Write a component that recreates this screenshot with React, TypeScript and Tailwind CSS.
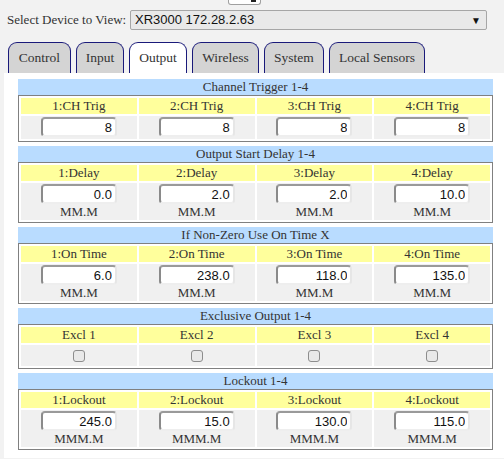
import React from "react";

const serif = "font-['Liberation_Serif','Times_New_Roman',serif]";
const sans = "font-['Liberation_Sans',Arial,sans-serif]";

type Sec = {
  title: string;
  labels: string[];
  values?: string[];
  unit?: string;
  checkbox?: boolean;
};

const sections: Sec[] = [
  { title: "Channel Trigger 1-4", labels: ["1:CH Trig", "2:CH Trig", "3:CH Trig", "4:CH Trig"], values: ["8", "8", "8", "8"] },
  { title: "Output Start Delay 1-4", labels: ["1:Delay", "2:Delay", "3:Delay", "4:Delay"], values: ["0.0", "2.0", "2.0", "10.0"], unit: "MM.M" },
  { title: "If Non-Zero Use On Time X", labels: ["1:On Time", "2:On Time", "3:On Time", "4:On Time"], values: ["6.0", "238.0", "118.0", "135.0"], unit: "MM.M" },
  { title: "Exclusive Output 1-4", labels: ["Excl 1", "Excl 2", "Excl 3", "Excl 4"], checkbox: true },
  { title: "Lockout 1-4", labels: ["1:Lockout", "2:Lockout", "3:Lockout", "4:Lockout"], values: ["245.0", "15.0", "130.0", "115.0"], unit: "MMM.M" },
];

const tabs = [
  { name: "Control", w: "w-[63px]" },
  { name: "Input", w: "w-[48px]" },
  { name: "Output", w: "w-[58px]", active: true },
  { name: "Wireless", w: "w-[67px]" },
  { name: "System", w: "w-[60px]" },
  { name: "Local Sensors", w: "w-[96px]" },
];

function Section({ s }: { s: Sec }) {
  return (
    <div>
      <div className="h-[16px] bg-[#b9dcff] text-center text-[13px] leading-[16px] text-[#333]">{s.title}</div>
      <div className="grid grid-cols-4 gap-[2px] border border-[#808080] bg-white p-[2px]">
        {s.labels.map((l) => (
          <div key={l} className="h-[16px] bg-[#ffff9c] text-center text-[13px] leading-[16px] text-[#333]">
            {l}
          </div>
        ))}
        {s.checkbox
          ? s.labels.map((l) => (
              <div key={l + "c"} className="flex h-[21px] items-center justify-center bg-[#f0f0f0]">
                <div className="h-[12px] w-[12px] rounded-[3px] border border-[#8d8d8d] bg-[#e9e9e9]" />
              </div>
            ))
          : s.values!.map((v, i) => (
              <div key={i} className={`flex flex-col items-center bg-[#f0f0f0] pt-[1px] ${s.unit ? "" : "pb-[2px]"}`}>
                <input
                  readOnly
                  value={v}
                  className={`${sans} h-[20px] w-[76px] rounded-[4px] border-2 border-t-[#9a9a9a] border-l-[#8a8a8a] border-r-[#e6e6e6] border-b-[#eeeeee] bg-white pr-[3px] text-right text-[13px] text-[#111] outline-none`}
                />
                {s.unit && <div className="h-[16px] text-[13px] leading-[16px] text-[#333]">{s.unit}</div>}
              </div>
            ))}
      </div>
    </div>
  );
}

export default function App() {
  return (
    <div className={`${serif} min-h-[459px] w-[504px] overflow-hidden bg-[#f2f2f2] text-[13px] text-[#333]`}>
      <div className="relative ml-[228px] h-[5px] w-[33px] rounded-b-[3px] border border-t-0 border-[#a0a0a0] bg-white">
        <div className="absolute right-[4px] top-0 h-[2px] w-[5px] bg-[#222]" />
      </div>
      <div className="mt-[5px] flex h-[20px] items-center pl-[7px]">
        <span className="w-[123px] flex-none text-[13px] text-[#333]">Select Device to View:</span>
        <div className={`${sans} flex h-[20px] w-[357px] flex-none items-center justify-between rounded-[2px] border border-[#a6a6a6] bg-[#e9e9e9] pl-[4px] pr-[5px] text-[13px] text-[#111]`}>
          <span>XR3000 172.28.2.63</span>
          <span className="text-[10px] text-[#111]">▼</span>
        </div>
      </div>
      <div className="relative z-10 mt-[12px] flex gap-[5px] pl-[8px]">
        {tabs.map((t) => (
          <div
            key={t.name}
            className={`${t.w} flex h-[31px] items-center justify-center rounded-t-[9px] border border-b-0 border-[#1a1a7a] pt-[1px] text-[13.5px] text-[#333] ${t.active ? "bg-white" : "bg-[#d4d4d4]"}`}
          >
            {t.name}
          </div>
        ))}
      </div>
      <div className="ml-[4px] flex flex-col gap-[4px] bg-white pb-[8px] pl-[14px] pr-[11px] pt-[6px]">
        {sections.map((s) => (
          <Section key={s.title} s={s} />
        ))}
      </div>
    </div>
  );
}
